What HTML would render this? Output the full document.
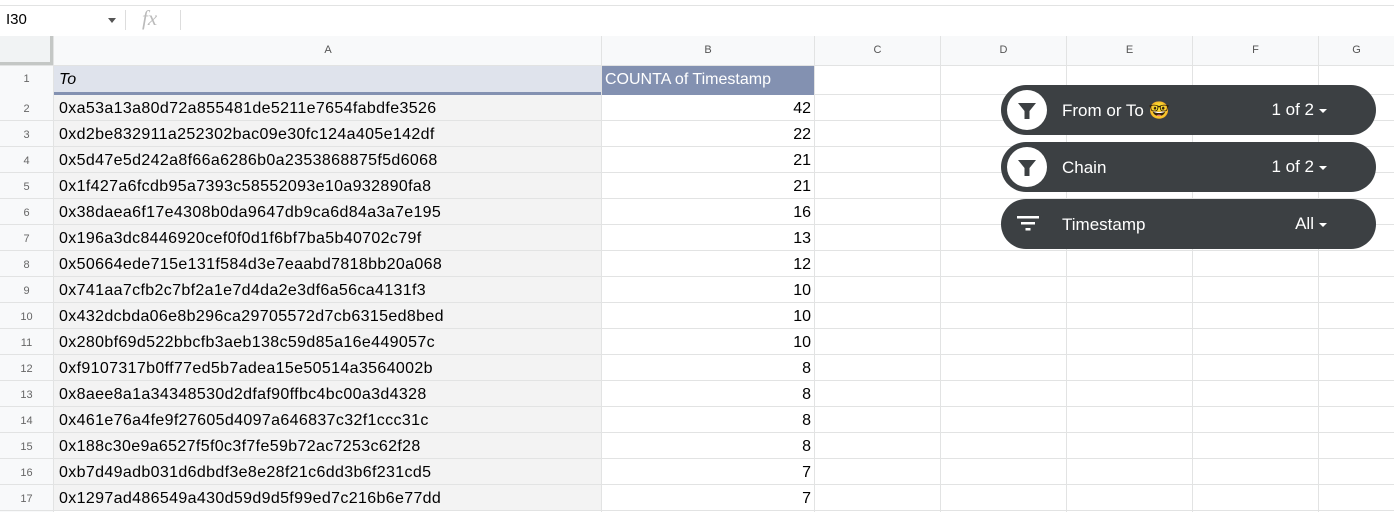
<!DOCTYPE html><html><head><style>
body{margin:0;width:1394px;height:512px;overflow:hidden;background:#fff;font-family:"Liberation Sans",Arial,sans-serif;position:relative}
.a{position:absolute}
.vl{position:absolute;top:36px;height:476px;width:1px;background:#e2e3e3}
.rh{position:absolute;left:0;width:53px;text-align:center;font-size:11px;color:#666;background:#f8f9fa}
.ca{position:absolute;left:54px;width:543px;padding-left:5px;font-size:16px;letter-spacing:0.35px;color:#000;background:#f3f3f3;white-space:nowrap;overflow:hidden}
.cb{position:absolute;left:602px;width:209px;text-align:right;font-size:16px;color:#000}
.hl{position:absolute;left:0;width:1394px;height:1px;background:#e2e3e3}
.pill{position:absolute;left:1001px;width:375px;height:50px;border-radius:25px;background:#3c4043;color:#fff;font-family:"Liberation Sans",sans-serif}
.pill .c{position:absolute;left:6px;top:5px;width:40px;height:40px;border-radius:50%;background:#fff}
.pill .t{position:absolute;left:61px;top:16px;font-size:17px}
.pill .v{position:absolute;right:50px;top:15px;font-size:17px}
.pill .ar{position:absolute;right:49px;top:24px;width:0;height:0;border-left:4px solid transparent;border-right:4px solid transparent;border-top:4px solid #fff}
</style></head><body>
<div class="a" style="left:0;top:5px;width:1394px;height:30px;border-top:1px solid #e2e3e3;border-bottom:1px solid #c7c7c7"></div>
<div class="a" style="left:6px;top:11px;font-size:15px">I30</div>
<div class="a" style="left:108px;top:18px;border-left:4px solid transparent;border-right:4px solid transparent;border-top:5px solid #555"></div>
<div class="a" style="left:125px;top:10px;width:1px;height:20px;background:#ddd"></div>
<div class="a" style="left:142px;top:6px;font-size:21px;font-style:italic;color:#bbb;font-family:'Liberation Serif',serif">fx</div>
<div class="a" style="left:180px;top:10px;width:1px;height:20px;background:#ddd"></div>
<div class="a" style="left:0;top:36px;width:1394px;height:29px;background:#f8f9fa"></div>
<div class="a" style="left:0;top:36px;background:#f1f3f4;border-right:4px solid #c4c7c5;border-bottom:4px solid #c4c7c5;box-sizing:border-box;width:54px;height:30px"></div>
<div class="a" style="left:0;top:65px;width:53px;height:447px;background:#f8f9fa"></div>
<div class="a" style="left:54px;top:36px;width:548px;text-align:center;font-size:11px;color:#555;line-height:29px">A</div>
<div class="a" style="left:602px;top:36px;width:212px;text-align:center;font-size:11px;color:#555;line-height:29px">B</div>
<div class="a" style="left:815px;top:36px;width:125px;text-align:center;font-size:11px;color:#555;line-height:29px">C</div>
<div class="a" style="left:941px;top:36px;width:125px;text-align:center;font-size:11px;color:#555;line-height:29px">D</div>
<div class="a" style="left:1067px;top:36px;width:125px;text-align:center;font-size:11px;color:#555;line-height:29px">E</div>
<div class="a" style="left:1193px;top:36px;width:125px;text-align:center;font-size:11px;color:#555;line-height:29px">F</div>
<div class="a" style="left:1319px;top:36px;width:75px;text-align:center;font-size:11px;color:#555;line-height:29px">G</div>
<div class="a" style="left:54px;top:66px;width:548px;height:26px;background:#dfe3ec"></div>
<div class="a" style="left:54px;top:92px;width:548px;height:3px;background:#8391b1"></div>
<div class="a" style="left:602px;top:66px;width:212px;height:29px;background:#8391b1"></div>
<div class="a" style="left:59px;top:71px;font-size:16px;font-style:italic">To</div>
<div class="a" style="left:605px;top:71px;font-size:16px;color:#fff">COUNTA of Timestamp</div>
<div class="rh" style="top:66px;line-height:27px">1</div>
<div id="rows"></div>
<script>
var d=[["0xa53a13a80d72a855481de5211e7654fabdfe3526",42],["0xd2be832911a252302bac09e30fc124a405e142df",22],["0x5d47e5d242a8f66a6286b0a2353868875f5d6068",21],["0x1f427a6fcdb95a7393c58552093e10a932890fa8",21],["0x38daea6f17e4308b0da9647db9ca6d84a3a7e195",16],["0x196a3dc8446920cef0f0d1f6bf7ba5b40702c79f",13],["0x50664ede715e131f584d3e7eaabd7818bb20a068",12],["0x741aa7cfb2c7bf2a1e7d4da2e3df6a56ca4131f3",10],["0x432dcbda06e8b296ca29705572d7cb6315ed8bed",10],["0x280bf69d522bbcfb3aeb138c59d85a16e449057c",10],["0xf9107317b0ff77ed5b7adea15e50514a3564002b",8],["0x8aee8a1a34348530d2dfaf90ffbc4bc00a3d4328",8],["0x461e76a4fe9f27605d4097a646837c32f1ccc31c",8],["0x188c30e9a6527f5f0c3f7fe59b72ac7253c62f28",8],["0xb7d49adb031d6dbdf3e8e28f21c6dd3b6f231cd5",7],["0x1297ad486549a430d59d9d5f99ed7c216b6e77dd",7]];
var h="";
for(var i=0;i<d.length;i++){var t=95+i*26;
h+='<div class="rh" style="top:'+t+'px;height:26px;line-height:28px">'+(i+2)+'</div>';
h+='<div class="ca" style="top:'+t+'px;height:25px;line-height:28px">'+d[i][0]+'</div>';
h+='<div class="cb" style="top:'+t+'px;line-height:28px">'+d[i][1]+'</div>';
h+='<div class="hl" style="top:'+(t+25)+'px"></div>';}
h+='<div class="hl" style="top:65px"></div><div class="hl" style="top:94px;left:814px;width:580px"></div>';
[53,601,814,940,1066,1192,1318].forEach(function(x){h+='<div class="vl" style="left:'+x+'px"></div>'});
document.getElementById('rows').innerHTML=h;
</script>
<div class="pill" style="top:85px"><div class="c"><svg width="40" height="40" viewBox="0 0 40 40"><path d="M11 13h18l-6.5 8v8h-5v-8z" fill="#3c4043"/></svg></div><div class="t">From or To 🤓</div><div class="v" style="right:62px">1 of 2</div><div class="ar"></div></div>
<div class="pill" style="top:142px"><div class="c"><svg width="40" height="40" viewBox="0 0 40 40"><path d="M11 13h18l-6.5 8v8h-5v-8z" fill="#3c4043"/></svg></div><div class="t">Chain</div><div class="v" style="right:62px">1 of 2</div><div class="ar"></div></div>
<div class="pill" style="top:199px"><svg class="a" style="left:14px;top:13px" width="26" height="24" viewBox="0 0 26 24"><rect x="2" y="4" width="22" height="2.5" fill="#fff"/><rect x="6" y="10" width="14" height="2.5" fill="#fff"/><rect x="10.5" y="16" width="5" height="2.5" fill="#fff"/></svg><div class="t">Timestamp</div><div class="v" style="right:62px">All</div><div class="ar"></div></div>
</body></html>
